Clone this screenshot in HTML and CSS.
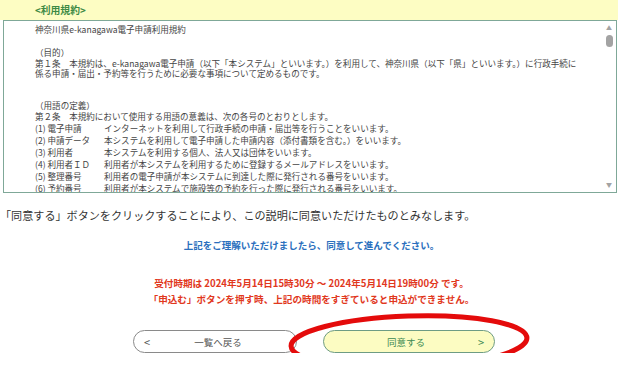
FILE: index.html
```html
<!DOCTYPE html>
<html lang="ja">
  <head>
    <meta charset="UTF-8" />
    <title>利用規約</title>
    <link rel="stylesheet" href="styles.css">
  </head>
  <body>
    <div class="terms">
      <div class="terms-head">&lt;利用規約&gt;</div>
      <div class="terms-box">
        <div class="terms-text">
          <p>神奈川県e-kanagawa電子申請利用規約</p>
          <p class="gap-1">（目的）<br>第１条　本規約は、e-kanagawa電子申請（以下「本システム」といいます。）を利用して、神奈川県（以下「県」といいます。）に行政手続に<br>係る申請・届出・予約等を行うために必要な事項について定めるものです。</p>
          <p class="gap-2">（用語の定義）<br>第２条　本規約において使用する用語の意義は、次の各号のとおりとします。</p>
          <dl class="term-list">
            <dt>(1) 電子申請</dt><dd>インターネットを利用して行政手続の申請・届出等を行うことをいいます。</dd>
            <dt>(2) 申請データ</dt><dd>本システムを利用して電子申請した申請内容（添付書類を含む。）をいいます。</dd>
            <dt class="term-short">(3) 利用者</dt><dd>本システムを利用する個人、法人又は団体をいいます。</dd>
            <dt>(4) 利用者ＩＤ</dt><dd>利用者が本システムを利用するために登録するメールアドレスをいいます。</dd>
            <dt>(5) 整理番号</dt><dd>利用者の電子申請が本システムに到達した際に発行される番号をいいます。</dd>
            <dt>(6) 予約番号</dt><dd>利用者が本システムで施設等の予約を行った際に発行される番号をいいます。</dd>
          </dl>
        </div>
        <div class="scrollbar">
          <span class="scroll-arrow">&#9650;</span>
          <span class="scroll-thumb"></span>
          <span class="scroll-space"></span>
          <span class="scroll-arrow">&#9660;</span>
        </div>
      </div>
    </div>

    <p class="agree-note">「同意する」ボタンをクリックすることにより、この説明に同意いただけたものとみなします。</p>
    <p class="guide">上記をご理解いただけましたら、同意して進んでください。</p>
    <div class="period">
      <p>受付時期は 2024年5月14日15時30分 ～ 2024年5月14日19時00分 です。</p>
      <p>「申込む」ボタンを押す時、上記の時間をすぎていると申込ができません。</p>
    </div>

    <div class="actions">
      <button class="btn btn-back"><span class="btn-arrow">&lt;</span><span class="btn-label">一覧へ戻る</span></button>
      <button class="btn btn-agree"><span class="btn-label">同意する</span><span class="btn-arrow">&gt;</span></button>
      <svg class="mark" width="246" height="64" viewBox="0 0 246 64">
        <ellipse cx="123" cy="32" rx="118" ry="26" fill="none" stroke="#e40b0b" stroke-width="5" />
      </svg>
    </div>
  </body>
</html>
```

FILE: styles.css
```css
* {
  box-sizing: border-box;
  margin: 0;
  padding: 0;
}

body {
  font-family: "Noto Sans CJK JP", "Noto Sans", sans-serif;
  color: #333333;
  background: #ffffff;
  width: 623px;
}

.terms {
  width: 618px;
}

.terms-head {
  height: 20px;
  line-height: 20px;
  padding-left: 35px;
  background: #fdfdc3;
  color: #3d8a45;
  font-size: 9.8px;
  font-weight: bold;
}

.terms-box {
  display: flex;
  height: 173px;
  margin: 0 1px 0 3px;
  border: 1px solid #7fa898;
}

.terms-text {
  flex: 1;
  overflow: hidden;
  padding: 3px 0 0 31px;
  font-size: 8.55px;
  line-height: 10.8px;
  color: #444444;
  white-space: nowrap;
}

.gap-1 {
  margin-top: 12px;
}

.gap-2 {
  margin-top: 21px;
}

.term-list {
  display: grid;
  grid-template-columns: 69px 1fr;
  line-height: 12px;
}

.term-list dt.term-short {
  margin-right: -5px;
}

.scrollbar {
  width: 17px;
  display: flex;
  flex-direction: column;
  align-items: center;
  padding: 3px 0 3px 3px;
}

.scroll-arrow {
  font-size: 6px;
  line-height: 8px;
  color: #a3a3a3;
}

.scroll-thumb {
  width: 7px;
  height: 12px;
  margin-top: 3px;
  border-radius: 4px;
  background: #a3a3a3;
}

.scroll-space {
  flex: 1;
}

.agree-note {
  margin-top: 14px;
  font-size: 11.1px;
  line-height: 16px;
  color: #333333;
}

.guide {
  margin-top: 14px;
  text-align: center;
  font-size: 9.5px;
  line-height: 16px;
  font-weight: bold;
  color: #2a6fbd;
}

.period {
  margin-top: 22px;
  text-align: center;
  font-size: 9.6px;
  line-height: 16px;
  font-weight: bold;
  color: #e1381d;
}

.actions {
  position: relative;
  display: flex;
  justify-content: center;
  gap: 26px;
  margin-top: 23px;
  padding-left: 5px;
}

.btn {
  display: flex;
  align-items: center;
  height: 23px;
  border-radius: 12px;
  font-family: inherit;
  font-size: 9.5px;
  padding: 0 10px;
  background: #ffffff;
}

.btn-back {
  width: 164px;
  border: 1px solid #8a8a8a;
  color: #555555;
}

.btn-agree {
  width: 172px;
  border: 1px solid #6e9c84;
  background: #fcfcc2;
  color: #3b8a52;
}

.btn-label {
  flex: 1;
  text-align: center;
}

.btn-arrow {
  font-size: 11px;
}

.mark {
  position: absolute;
  left: 286px;
  top: -20px;
  transform: rotate(-2deg);
}
```
